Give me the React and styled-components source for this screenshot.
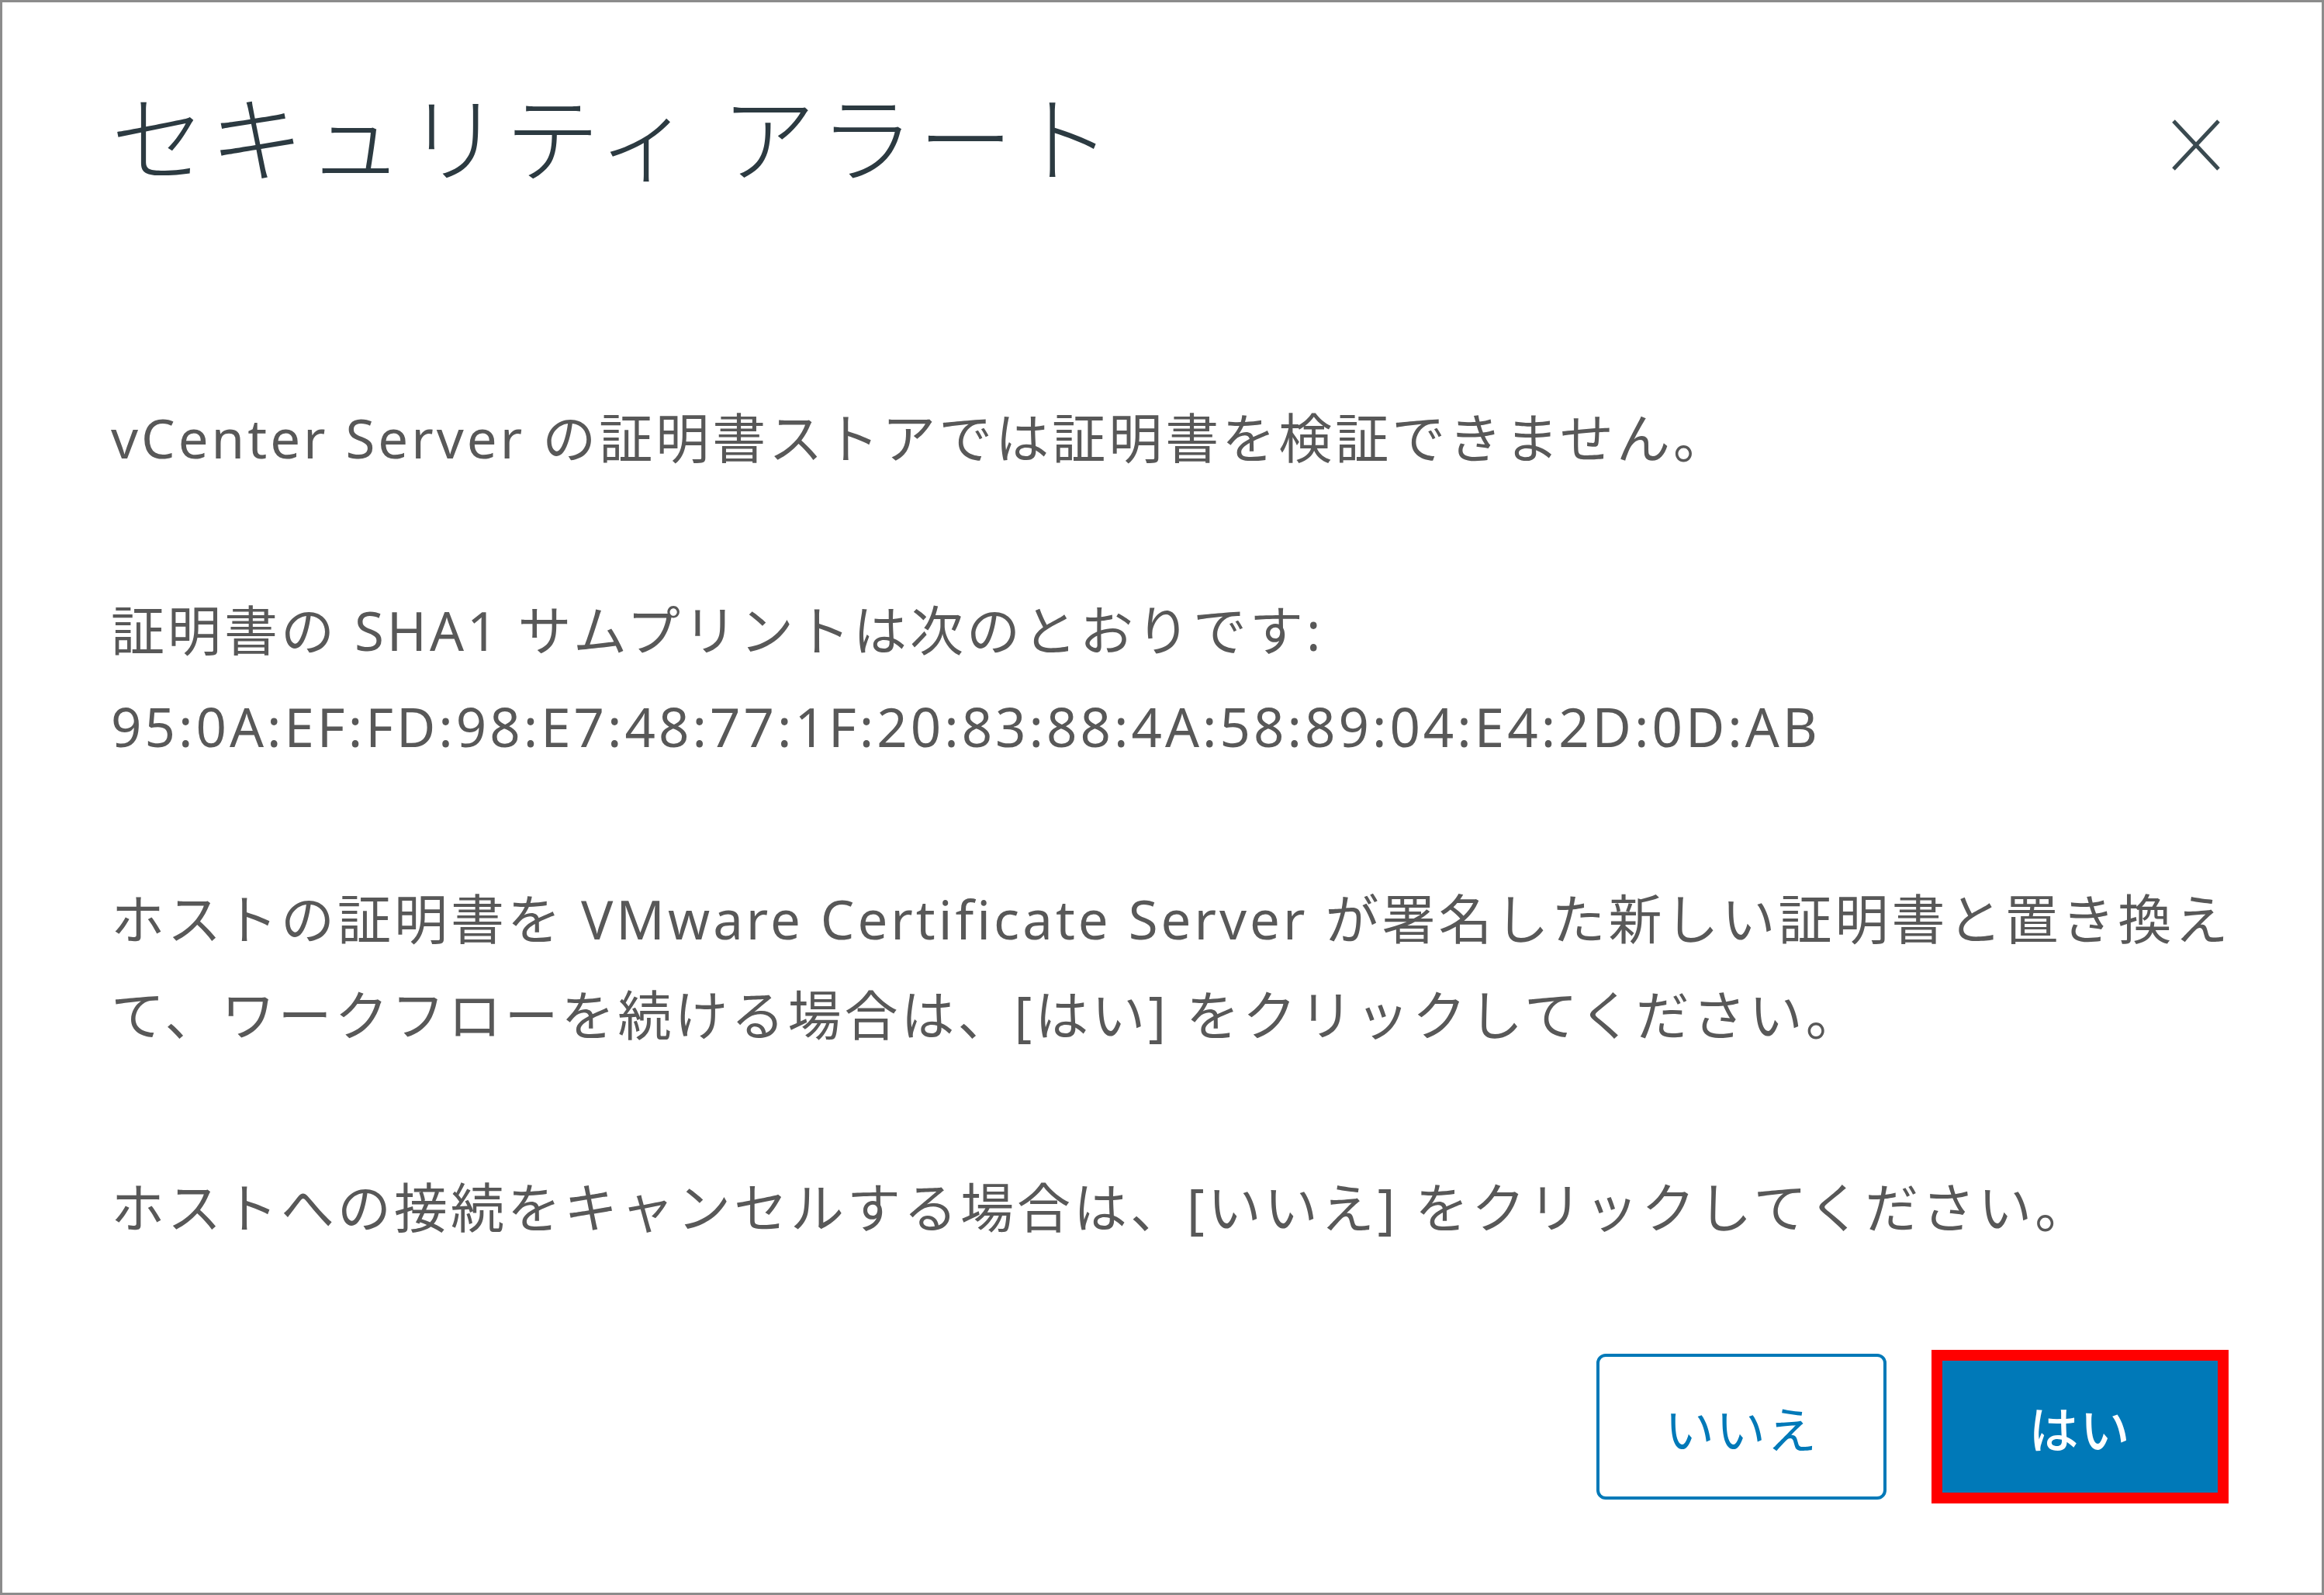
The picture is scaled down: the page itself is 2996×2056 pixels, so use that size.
import React from "react";
import styled, { createGlobalStyle } from "styled-components";

const Global = createGlobalStyle`
  html, body { margin: 0; padding: 0; background: #ffffff; }
  * { box-sizing: border-box; }
`;

const FONT = `"Noto Sans", "Noto Sans CJK JP", sans-serif`;

const Dialog = styled.div`
  width: 2996px;
  height: 2056px;
  border: 3px solid #8c8c8c;
  background: #ffffff;
  padding: 97px 120px 0 140px;
  display: flex;
  flex-direction: column;
  font-family: ${FONT};
`;

const Header = styled.div`
  display: flex;
  justify-content: space-between;
  align-items: flex-start;
`;

const Title = styled.h1`
  margin: 0;
  font-family: "Noto Sans CJK JP", sans-serif;
  font-size: 122px;
  line-height: 144px;
  letter-spacing: 5px;
  font-weight: 300;
  color: #2c3a41;
  white-space: nowrap;
`;

const CloseButton = styled.button`
  margin-top: 53px;
  margin-right: 10px;
  padding: 0;
  border: none;
  background: transparent;
  width: 64px;
  height: 68px;
  display: flex;
  cursor: pointer;
`;

const Body = styled.div`
  margin-top: 258px;
  display: flex;
  flex-direction: column;
  gap: 124px;
`;

const Para = styled.p`
  margin: 0;
  font-size: 69px;
  line-height: 124px;
  letter-spacing: 4px;
  color: #585858;
  white-space: nowrap;
  font-weight: 400;
`;

const Footer = styled.div`
  margin-top: 122px;
  display: flex;
  justify-content: flex-end;
  align-items: center;
  gap: 58px;
`;

const Button = styled.button`
  font-family: "Noto Sans CJK JP", sans-serif;
  font-size: 64px;
  font-weight: ${(p) => (p.$primary ? 500 : 400)};
  letter-spacing: 2px;
  display: flex;
  align-items: center;
  justify-content: center;
  cursor: pointer;
  width: ${(p) => p.$w}px;
  height: ${(p) => p.$h}px;
  border-radius: ${(p) => (p.$primary ? 0 : 12)}px;
  border: ${(p) => (p.$primary ? "none" : "4px solid #0079b8")};
  background: ${(p) => (p.$primary ? "#0079b8" : "#ffffff")};
  color: ${(p) => (p.$primary ? "#ffffff" : "#0079b8")};
  padding: 0;
`;

const Highlight = styled.span`
  display: flex;
  border: 14px solid #ff0000;
`;

const CloseIcon = () => (
  <svg width="64" height="68" viewBox="0 0 64 68">
    <line x1="3" y1="3" x2="61" y2="65" stroke="#3a4a50" strokeWidth="5" />
    <line x1="61" y1="3" x2="3" y2="65" stroke="#3a4a50" strokeWidth="5" />
  </svg>
);

export default function App() {
  return (
    <>
      <Global />
      <Dialog>
        <Header>
          <Title>セキュリティ アラート</Title>
          <CloseButton aria-label="close">
            <CloseIcon />
          </CloseButton>
        </Header>
        <Body>
          <Para>vCenter Server の証明書ストアでは証明書を検証できません。</Para>
          <Para>
            証明書の SHA1 サムプリントは次のとおりです:
            <br />
            95:0A:EF:FD:98:E7:48:77:1F:20:83:88:4A:58:89:04:E4:2D:0D:AB
          </Para>
          <Para>
            ホストの証明書を VMware Certificate Server が署名した新しい証明書と置き換え
            <br />
            て、ワークフローを続ける場合は、[はい] をクリックしてください。
          </Para>
          <Para>ホストへの接続をキャンセルする場合は、[いいえ] をクリックしてください。</Para>
        </Body>
        <Footer>
          <Button $w={374} $h={188}>いいえ</Button>
          <Highlight>
            <Button $primary $w={355} $h={170}>はい</Button>
          </Highlight>
        </Footer>
      </Dialog>
    </>
  );
}
